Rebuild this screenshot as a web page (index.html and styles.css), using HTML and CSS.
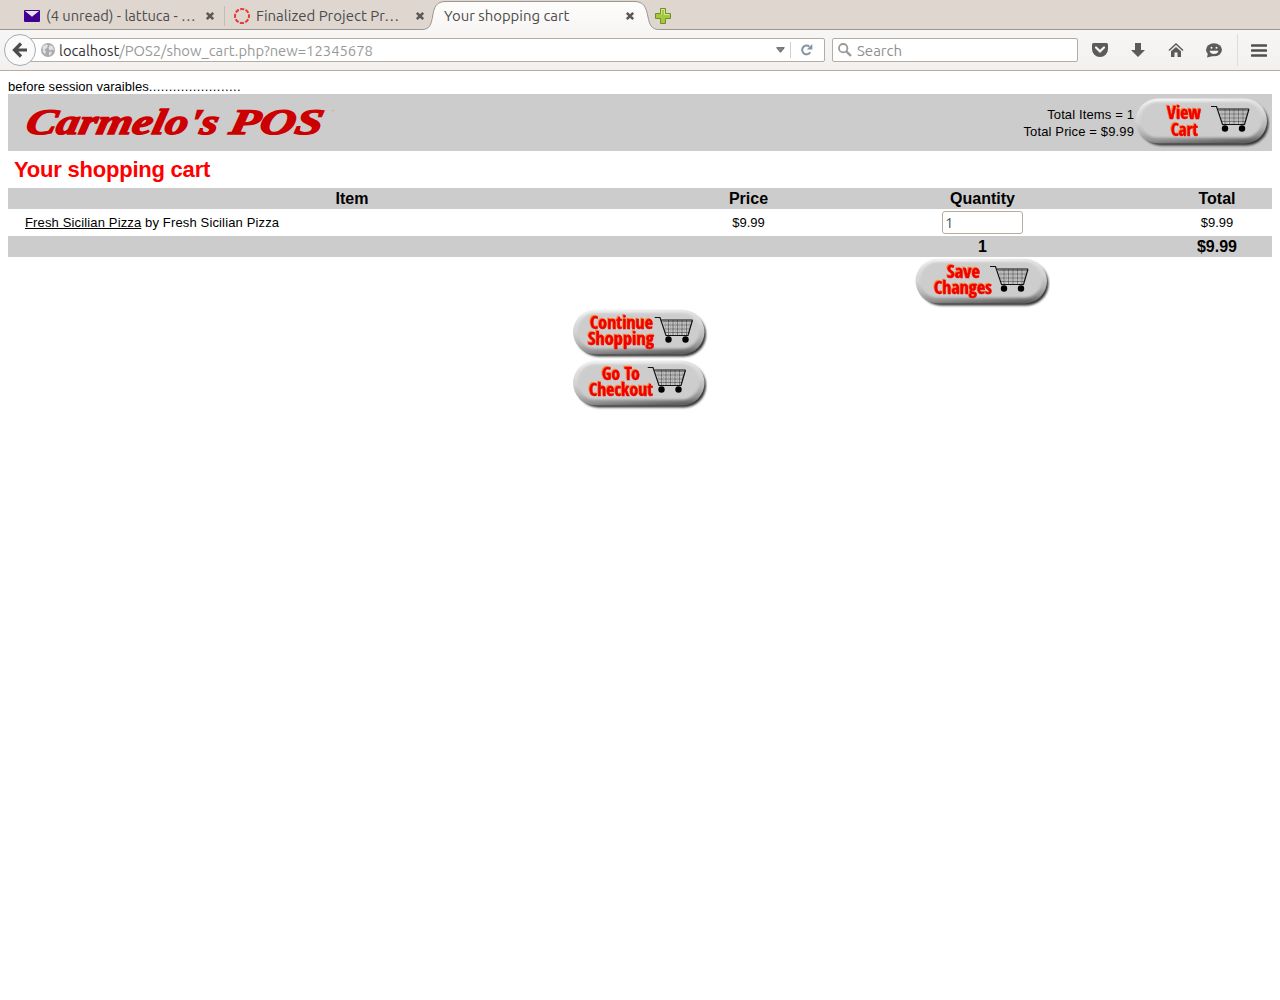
FILE: index.html
```html
<!DOCTYPE html>
<html lang="en">
<head>
<meta charset="utf-8">
<title>Your shopping cart</title>
<link rel="stylesheet" href="styles.css">
</head>
<body>
<svg class="defs" width="0" height="0" aria-hidden="true">
  <defs>
    <linearGradient id="face" x1=".42" y1="0" x2=".58" y2="1">
      <stop offset="0" stop-color="#f0f0f0"/><stop offset=".15" stop-color="#e2e2e2"/><stop offset=".45" stop-color="#d2d2d2"/><stop offset=".7" stop-color="#b4b4b4"/><stop offset=".88" stop-color="#909090"/><stop offset="1" stop-color="#606060"/>
    </linearGradient>
    <filter id="soft" x="-10%" y="-20%" width="120%" height="140%"><feGaussianBlur stdDeviation="1.2"/></filter>
    <filter id="edge" x="-10%" y="-20%" width="120%" height="140%"><feGaussianBlur stdDeviation=".5"/></filter>
    <filter id="bevel" x="-10%" y="-20%" width="120%" height="140%"><feGaussianBlur stdDeviation="1.2"/></filter>
    <symbol id="pill" viewBox="0 0 135 51">
      <rect x="4" y="4.500" width="129.500" height="44" rx="22" fill="#333" filter="url(#soft)"/>
      <rect x=".5" y="1.500" width="131.500" height="45" rx="22.500" fill="url(#face)" filter="url(#edge)"/>
      <rect x="5" y="5" width="122" height="35.500" rx="17.700" fill="#cdcdcd" filter="url(#bevel)"/>
    </symbol>
    <symbol id="trolley" viewBox="0 0 40 28">
      <path d="M8 5.500H38M9 9H37M10 13H36M11 16.500H35M14 4V19M18.500 4V19M23 4V19M27.500 4V19M32 4V19" stroke="#555" stroke-width=".7" fill="none"/>
      <path d="M11 4V17M16 4V19M21 4V19M25 4V19M30 4V19M35 4V16M8 7H37M10 11H36M11 15H35" stroke="#999" stroke-width=".5" fill="none"/>
      <path d="M0 1.500H5.500L11.500 19.500H33.500L38 4M7 4H38" stroke="#111" stroke-width="1.200" fill="none"/>
      <circle cx="14" cy="23.500" r="3.200"/><circle cx="31" cy="23.500" r="3.200"/>
    </symbol>
    <symbol id="close" viewBox="0 0 10 10"><path d="M1.800 1.800 8.200 8.200M8.200 1.800 1.800 8.200" stroke="#5b5955" stroke-width="2.600"/></symbol>
  </defs>
</svg>

<div class="tabs">
  <div class="tab tab-first">
    <svg width="16" height="12" viewBox="0 0 16 12"><rect width="16" height="12" rx="1" fill="#400090"/><path d="M1 1H15L8 6.800Z" fill="#e9e2ee"/></svg>
    <span class="tab-title t1">(4 unread) - lattuca - …</span>
    <svg class="x" width="10" height="10"><use href="#close"/></svg>
  </div>
  <div class="tab tab-second">
    <svg width="16" height="16" viewBox="0 0 16 16"><circle cx="8" cy="8" r="7" fill="none" stroke="#e43b33" stroke-width="2" stroke-dasharray="4.100 1.398" stroke-dashoffset="2.050"/></svg>
    <span class="tab-title t2">Finalized Project Pr…</span>
    <svg class="x" width="10" height="10"><use href="#close"/></svg>
  </div>
  <div class="tab tab-active">
    <svg class="tab-shape" width="246" height="31" viewBox="0 0 246 31">
      <defs><linearGradient id="tabfill" x1="0" y1="0" x2="0" y2="1"><stop offset="0" stop-color="#fdfdfc"/><stop offset="1" stop-color="#f8f6f4"/></linearGradient></defs>
      <path d="M0 31V29.500C8 29.500 9 24 10.500 17C12 7 14 1.500 24 1.500H212C222 1.500 224 7 226 17C227.500 24 229 29.500 237 29.500H246V31Z" fill="url(#tabfill)"/>
      <path d="M0 29.500C8 29.500 9 24 10.500 17C12 7 14 1.500 24 1.500H212C222 1.500 224 7 226 17C227.500 24 229 29.500 237 29.500H246" fill="none" stroke="#9b9690"/>
    </svg>
    <span class="tab-title t3">Your shopping cart</span>
    <svg class="x" width="10" height="10"><use href="#close"/></svg>
  </div>
  <svg class="plus" width="16" height="16" viewBox="0 0 16 16"><path d="M5.500.5h5v5h5v5h-5v5h-5v-5h-5v-5h5z" fill="#a5c93b" stroke="#6b922a"/><path d="M6.500 6.500V1.500h3v5h5" fill="none" stroke="#d4e78e"/></svg>
</div>

<div class="nav">
  <div class="address">
    <svg class="globe" width="14" height="14" viewBox="0 0 14 14"><circle cx="7" cy="7" r="7" fill="#aaa"/><path d="M1.500 3.500 5 1.200 7 2.500 6 5 3.500 6.500 5 8.500 4 11.500 2 9ZM9 2l3 1.500 1 4-2-1-2.500 1L7.500 5ZM8 9l3-.5-1 3-2 1z" fill="#e2e2e2"/></svg>
    <span class="url"><b>localhost</b>/POS2/show_cart.php?new=12345678</span>
    <svg class="drop" width="9" height="6" viewBox="0 0 9 6"><path d="M.7.7H8.300L4.500 5.300Z" fill="#888" stroke="#5e5e5e"/></svg>
    <i class="split"></i>
    <svg width="12" height="12" viewBox="0 0 12 12"><path d="M9.300 8.300A4.400 4.400 0 1 1 8.300 2.500" fill="none" stroke="#8494a3" stroke-width="2"/><path d="M11.300 0V5.500H5.800Z" fill="#8494a3"/></svg>
  </div>
  <svg class="back" width="34" height="34" viewBox="0 0 34 34"><circle cx="17" cy="17" r="15.500" fill="#fbfafa" stroke="#a4abb5"/><path d="M18 10.500 11.500 17l6.500 6.500M11.500 17H24" fill="none" stroke="#4c4c4c" stroke-width="3.200"/></svg>
  <div class="search">
    <svg width="14" height="14" viewBox="0 0 14 14"><circle cx="5.200" cy="5.200" r="4.200" fill="none" stroke="#999" stroke-width="1.800"/><path d="M8.300 8.300 13 13" stroke="#999" stroke-width="2.400"/></svg>
    <span class="hint">Search</span>
  </div>
  <div class="tools">
    <svg width="16" height="14" viewBox="0 0 16 14"><path d="M1.500 0h13Q16 0 16 1.500V6A8 8 0 0 1 0 6V1.500Q0 0 1.500 0Z" fill="#5b5b5b"/><path d="M4 4.500 8 8.400 12 4.500" fill="none" stroke="#f7f6f5" stroke-width="2.200" stroke-linecap="round"/></svg>
    <svg width="14" height="14" viewBox="0 0 14 14"><path d="M4 0h6v7h4l-7 7-7-7h4z" fill="#5b5b5b"/></svg>
    <svg width="16" height="14" viewBox="0 0 16 14"><path d="M1 7.500 8 1l7 6.500" fill="none" stroke="#5b5b5b" stroke-width="1.500"/><path d="M3 8.300 8 3.900l5 4.400V14H9.500V9.500h-3V14H3z" fill="#5b5b5b"/></svg>
    <svg width="16" height="15" viewBox="0 0 16 15"><ellipse cx="8" cy="6.800" rx="8" ry="6.500" fill="#5b5b5b"/><path d="M2 10 1 14.500 7 13z" fill="#5b5b5b"/><path d="M3.500 7.800h9Q11.500 11 8 11T3.500 7.800Z" fill="#f7f6f5"/><circle cx="5.500" cy="4.800" r="1" fill="#f7f6f5"/><circle cx="10.500" cy="4.800" r="1" fill="#f7f6f5"/></svg>
    <i class="rule"></i>
    <svg width="16" height="13" viewBox="0 0 16 13"><path d="M1 1.500H15M1 6.500H15M1 11.500H15" stroke="#4f4f4f" stroke-width="2.600" stroke-linecap="round"/></svg>
  </div>
</div>

<main class="page">
  <div class="debug">before session varaibles<span class="dots">.......................</span></div>
  <header class="banner">
    <svg class="logo" width="330" height="57" viewBox="0 0 330 57">
      <g class="logo-text" transform="translate(7.500 0) skewX(-12)">
        <text x="17.500" y="40" textLength="192" lengthAdjust="spacingAndGlyphs">Carmelo's</text>
        <text x="221" y="40" textLength="93" lengthAdjust="spacingAndGlyphs">POS</text>
      </g>
      <rect x="324" y="16" width="2" height="1" fill="#f0a050"/>
    </svg>
    <div class="totals">Total Items = 1<br>Total Price = $9.99</div>
    <svg class="btn" width="135" height="51"><use href="#pill"/>
      <g class="label"><text x="32" y="22" textLength="34" lengthAdjust="spacingAndGlyphs">View</text><text x="36" y="38.500" textLength="27" lengthAdjust="spacingAndGlyphs">Cart</text></g>
      <use href="#trolley" x="76" y="8" width="40" height="28"/></svg>
  </header>
  <h2>Your shopping cart</h2>
  <table>
    <colgroup><col class="c-item"><col class="c-price"><col class="c-qty"><col class="c-total"></colgroup>
    <tr class="bar"><th>Item</th><th>Price</th><th>Quantity</th><th>Total</th></tr>
    <tr class="line"><td class="item"><a>Fresh Sicilian Pizza</a> by Fresh Sicilian Pizza</td><td>$9.99</td><td><span class="qty">1</span></td><td>$9.99</td></tr>
    <tr class="bar"><th></th><th></th><th>1</th><th>$9.99</th></tr>
    <tr class="save"><td></td><td></td><td>
      <svg class="btn" width="135" height="51"><use href="#pill"/>
        <g class="label"><text x="32" y="21" textLength="33" lengthAdjust="spacingAndGlyphs">Save</text><text x="19" y="37" textLength="58" lengthAdjust="spacingAndGlyphs">Changes</text></g>
        <use href="#trolley" x="75" y="8" width="40" height="28"/></svg>
    </td><td></td></tr>
  </table>
  <div class="actions">
    <svg class="btn" width="135" height="51"><use href="#pill"/>
      <g class="label"><text x="17.500" y="21" textLength="63" lengthAdjust="spacingAndGlyphs">Continue</text><text x="15.500" y="37" textLength="66" lengthAdjust="spacingAndGlyphs">Shopping</text></g>
      <use href="#trolley" x="82" y="8" width="40" height="28"/></svg>
    <svg class="btn" width="135" height="51"><use href="#pill"/>
      <g class="label"><text x="29.500" y="21" textLength="38" lengthAdjust="spacingAndGlyphs">Go To</text><text x="16.500" y="37" textLength="64" lengthAdjust="spacingAndGlyphs">Checkout</text></g>
      <use href="#trolley" x="75" y="7" width="40" height="28"/></svg>
  </div>
</main>
</body>
</html>
```
FILE: styles.css
```css
* { box-sizing: border-box; }
body { margin: 0; background: #fff; color: #000; font-family: "Liberation Sans", Arial, sans-serif; }
svg { display: block; flex: none; }
.defs { position: absolute; }

.tabs { display: flex; height: 30px; background: #dfd6cf; border-bottom: 1px solid #9b9690; font-family: Ubuntu, "Noto Sans", sans-serif; font-size: 14.9px; color: #4c4c4c; }
.tab { display: flex; align-items: center; height: 31px; }
.tab-title { flex: 1; margin-left: 6px; white-space: nowrap; line-height: 20px; }
.t1 { font-size: 14.7px; }
.t2 { font-size: 15px; }
.tab-first { width: 225px; padding: 0 10px 0 24px; }
.tab-first { background: linear-gradient(#c4bbb3, #c4bbb3) 224px 6px / 1px 20px no-repeat; }
.tab-second { width: 200px; padding: 0 0 0 9px; }
.tab-active { position: relative; width: 228px; padding: 0 18px 0 19px; }
.tab-shape { position: absolute; left: -3px; top: 0; }
.tab-active .tab-title, .tab-active .x { position: relative; }
.tab-active .tab-title { margin-left: 0; }
.plus { position: relative; margin: 8px 0 0 2px; }

.nav { display: flex; align-items: center; position: relative; height: 41px; padding-left: 20px; background: linear-gradient(#f8f6f4, #f2f1ef); border-bottom: 1px solid #b8aca0; font-family: Ubuntu, "Noto Sans", sans-serif; font-size: 14.8px; }
.address, .search { display: flex; align-items: center; height: 24px; background: #fff; border: 1px solid #b8aca0; border-radius: 2px; }
.address { width: 805px; padding: 0 11px 0 20px; }
.back { position: absolute; left: 3px; top: 3px; }
.url { flex: 1; margin-left: 4px; line-height: 18px; padding-top: 1px; color: #999; white-space: nowrap; }
.url b { font-weight: 400; color: #333; }
.split { width: 1px; height: 16px; margin: 0 10px 0 5px; background: #d0d0d0; }
.search { width: 246px; margin-left: 7px; padding-left: 5px; }
.hint { margin-left: 5px; line-height: 18px; padding-top: 1px; font-size: 15px; color: #8f8f8f; }
.tools { display: flex; align-items: center; height: 40px; margin-left: 14px; }
.tools svg { margin-right: 22px; }
.tools svg:nth-child(2) { margin: 0 23px 0 1px; }
.tools svg:nth-child(4) { margin-right: 15px; }
.tools svg:last-child { margin: 0 0 0 13px; }
.rule { width: 1px; height: 32px; background: #dedbd8; }

.page { padding: 8px 8px 0; font-size: 13px; }
.debug { height: 15px; line-height: 15px; letter-spacing: .02px; }
.dots { letter-spacing: .4px; }
.banner { display: flex; align-items: center; height: 57px; padding-right: 2px; background: #ccc; }
.logo-text { font: italic bold 36px "Liberation Serif", serif; fill: #c00; stroke: #c00; stroke-width: 1.4px; }
.totals { margin-left: auto; padding-right: 1px; line-height: 17px; text-align: right; letter-spacing: .13px; }
.label { font: bold 18.5px "Open Sans Condensed", "Liberation Sans Narrow", "Open Sans", sans-serif; fill: #f00000; stroke: #f00000; stroke-width: .5px; filter: drop-shadow(-.7px -.4px 0 #f98a3a); }
h2 { margin: 0; padding: 6px 6px 0; height: 37px; font-size: 22px; line-height: 26px; letter-spacing: -.22px; color: #f00; }
table { width: 1264px; table-layout: fixed; border-collapse: collapse; }
.c-item { width: 688px; }
.c-price { width: 105px; }
.c-qty { width: 363px; }
.c-total { width: 108px; }
th, td { padding: 0; text-align: center; }
th:last-child, td:last-child { padding-right: 2px; }
.bar { height: 21px; background: #ccc; font-size: 16px; line-height: 20px; }
.line { height: 27px; }
.line .item { padding-left: 17px; text-align: left; letter-spacing: .145px; }
.item a { text-decoration: underline; }
.qty { display: block; width: 81px; height: 23px; margin: 0 auto; padding-left: 2px; border: 1px solid #b8aca0; border-radius: 3px; font: 14.8px/22px Ubuntu, "Noto Sans", sans-serif; color: #4c4c4c; text-align: left; }
.save { height: 51px; }
.save .btn, .actions .btn { margin: 0 auto; }
.actions .btn { transform: translateX(-.5px); }
```
